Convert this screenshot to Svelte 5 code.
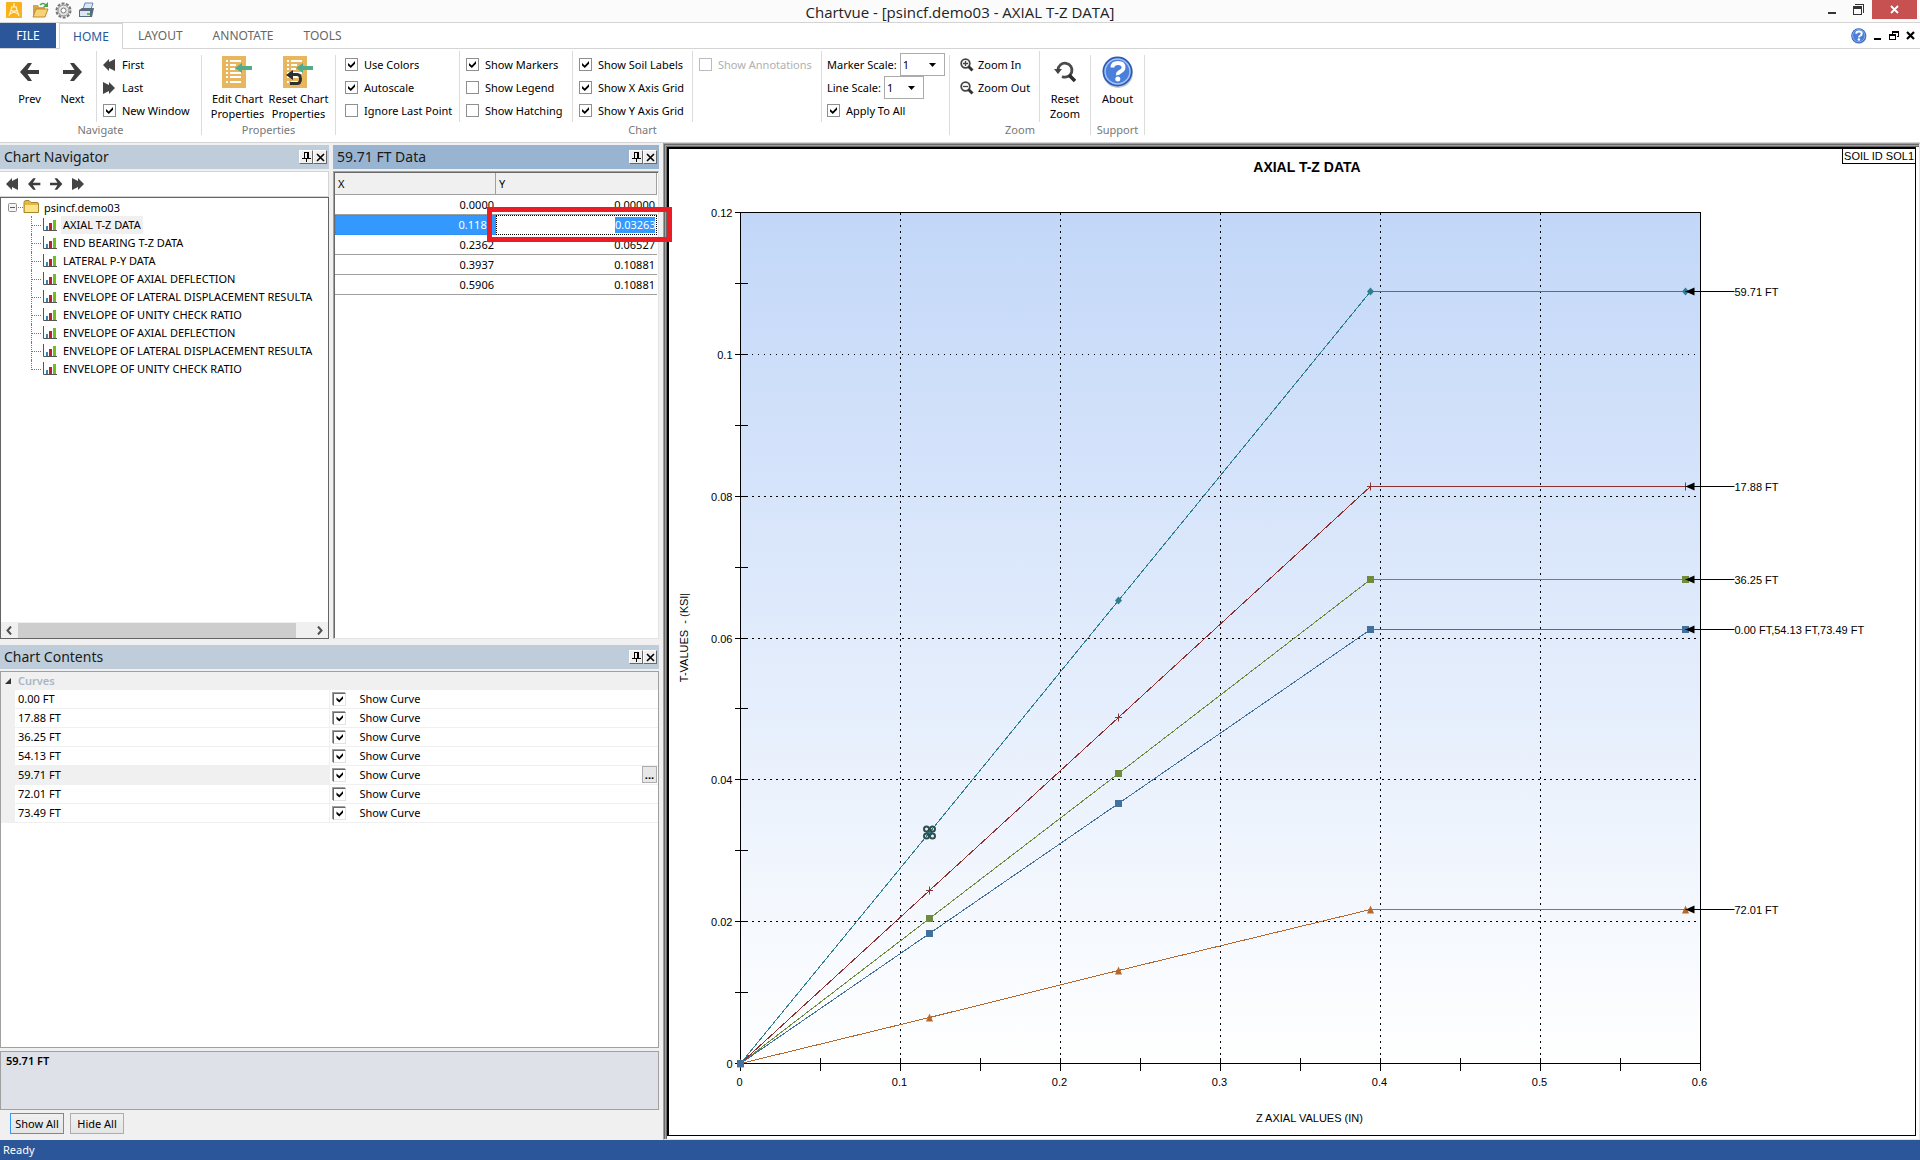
<script lang="ts">
	type Check = { label: string; on: boolean; disabled?: boolean };

	const tabs = ['LAYOUT', 'ANNOTATE', 'TOOLS'];

	const chartChecks: { cls: string; items: Check[] }[] = [
		{
			cls: 'colors',
			items: [
				{ label: 'Use Colors', on: true },
				{ label: 'Autoscale', on: true },
				{ label: 'Ignore Last Point', on: false }
			]
		},
		{
			cls: 'markers',
			items: [
				{ label: 'Show Markers', on: true },
				{ label: 'Show Legend', on: false },
				{ label: 'Show Hatching', on: false }
			]
		},
		{
			cls: 'grids',
			items: [
				{ label: 'Show Soil Labels', on: true },
				{ label: 'Show X Axis Grid', on: true },
				{ label: 'Show Y Axis Grid', on: true }
			]
		},
		{
			cls: 'notes',
			items: [{ label: 'Show Annotations', on: false, disabled: true }]
		}
	];

	const plots = [
		'AXIAL T-Z DATA',
		'END BEARING T-Z DATA',
		'LATERAL P-Y DATA',
		'ENVELOPE OF AXIAL DEFLECTION',
		'ENVELOPE OF LATERAL DISPLACEMENT RESULTA',
		'ENVELOPE OF UNITY CHECK RATIO',
		'ENVELOPE OF AXIAL DEFLECTION',
		'ENVELOPE OF LATERAL DISPLACEMENT RESULTA',
		'ENVELOPE OF UNITY CHECK RATIO'
	];
	let selectedPlot = $state(0);

	const points = [
		['0.0000', '0.00000'],
		['0.1181', '0.03263'],
		['0.2362', '0.06527'],
		['0.3937', '0.10881'],
		['0.5906', '0.10881']
	];
	let selectedPoint = $state(1);

	let curves = $state(
		['0.00 FT', '17.88 FT', '36.25 FT', '54.13 FT', '59.71 FT', '72.01 FT', '73.49 FT'].map(
			(name) => ({ name, shown: true })
		)
	);
	let selectedCurve = $state(4);

	function setAll(shown: boolean) {
		for (const c of curves) c.shown = shown;
	}

	// chart
	const xs = [0, 0.1181, 0.2362, 0.3937, 0.5906];
	const series = [
		{ label: '72.01 FT', color: '#b8672b', marker: 'triangle', ys: [0, 0.00655, 0.0131, 0.02178, 0.02178] },
		{ label: '36.25 FT', color: '#6f8c3c', marker: 'square', ys: [0, 0.02045, 0.0409, 0.06825, 0.06825] },
		{ label: '17.88 FT', color: '#8c3030', marker: 'cross', ys: [0, 0.0244, 0.0488, 0.0813, 0.0813] },
		{ label: '59.71 FT', color: '#2f7f93', marker: 'diamond', ys: [0, 0.03263, 0.06527, 0.10881, 0.10881] },
		{ label: '0.00 FT,54.13 FT,73.49 FT', color: '#41719c', marker: 'square', ys: [0, 0.01838, 0.0367, 0.0612, 0.0612] }
	];
	const maxX = 0.6;
	const maxY = 0.12;

	let width = $state(0);
	let height = $state(0);
	let left = 71;
	let top = 63;
	let right = $derived(width - 215);
	let bottom = $derived(height - 72);

	const px = (v: number) => Math.round(left + (v / maxX) * (right - left)) + 0.5;
	const py = (v: number) => Math.round(bottom - (v / maxY) * (bottom - top)) + 0.5;

	const xTicks = Array.from({ length: 13 }, (_, i) => i * 0.05);
	const yTicks = Array.from({ length: 13 }, (_, i) => i * 0.01);
	const tickLabel = (v: number) => String(Number(v.toFixed(2)));
</script>

{#snippet back()}
	<svg width="20" height="18" viewBox="0 0 20 18"><path d="M0 9 8 0h4L7.500 7H19v4H7.500l4.500 7H8z" fill="#3d3d3d" /></svg>
{/snippet}

{#snippet forward()}
	<svg width="20" height="18" viewBox="0 0 20 18"><path d="M19 9 11 0H7l4.500 7H0v4h11.500L7 18h4z" fill="#3d3d3d" /></svg>
{/snippet}

{#snippet rewind()}
	<svg width="13" height="12" viewBox="0 0 13 12"><path d="M0 6 6 0v3l6-3v12L6 9v3z" fill="#444" /></svg>
{/snippet}

{#snippet fastForward()}
	<svg width="13" height="12" viewBox="0 0 13 12"><path d="M12 6 6 0v3L0 0v12l6-3v3z" fill="#444" /></svg>
{/snippet}

{#snippet sheet(undo: boolean)}
	<svg width="32" height="32" viewBox="0 0 32 32">
		<path d="M0 0h24v32H0z" fill="#e9b660" />
		<path d="M4 5h2m2 0h11M4 9h2m2 0h6M4 13h2m2 0h5M4 17h2m2 0h11M4 21h2m2 0h11M4 26h2m2 0h11" stroke="#fff" stroke-width="2" />
		<path d="M13 12 20 7v3h10v4H20v3z" fill="#52ab8a" />
		{#if undo}
			<path d="M3 19l7-5v3h4q5 0 5 6t-5 6H7v-3h7q2 0 2-3t-2-3h-4v4z" fill="#2f2f2f" />
		{/if}
	</svg>
{/snippet}

{#snippet lens(plus: boolean)}
	<svg width="14" height="14" viewBox="0 0 14 14">
		<circle cx="5.500" cy="5.500" r="4.300" fill="none" stroke="#444" stroke-width="1.800" />
		<path d="M8.500 8.500 12.500 12.500" stroke="#333" stroke-width="3" />
		<path d={plus ? 'M3 5.500h5M5.500 3v5' : 'M3 5.500h5'} stroke="#444" stroke-width="1.300" />
	</svg>
{/snippet}

{#snippet help(size: number)}
	<svg width={size} height={size} viewBox="0 0 32 32">
		<circle cx="16" cy="17" r="15" fill="#c4c8d0" />
		<circle cx="15.500" cy="15.500" r="15" fill="#2c5ab8" />
		<circle cx="15.500" cy="15.500" r="12.500" fill="#4a80dc" stroke="#a9c4f0" stroke-width="1.500" />
		<path d="M10.500 11.500q0-4.500 5.500-4.500t5.500 4.500q0 2.500-3 4t-2.500 3.500" fill="none" stroke="#fff" stroke-width="3.800" />
		<circle cx="15.800" cy="23" r="2.500" fill="#fff" />
	</svg>
{/snippet}

{#snippet paneTitle(text: string)}
	<span>{text}</span>
	<button class="pane-btn" aria-label="Auto hide">
		<svg width="9" height="10" viewBox="0 0 9 10" shape-rendering="crispEdges"><path d="M2 0h5v6h2v1H5v3H4V7H0V6h2zM3 1v5h2V1z" fill-rule="evenodd" /></svg>
	</button>
	<button class="pane-btn" aria-label="Close pane">
		<svg width="9" height="9" viewBox="0 0 9 9"><path d="M1 1l7 7M8 1l-7 7" stroke="#000" stroke-width="1.600" /></svg>
	</button>
{/snippet}

{#snippet marker(kind: string, x: number, y: number, color: string)}
	{#if kind === 'square'}
		<rect x={x - 3.5} y={y - 3.5} width="7" height="7" fill={color} />
	{:else if kind === 'triangle'}
		<path d="M{x} {y - 4}l3.500 8h-7z" fill={color} />
	{:else if kind === 'diamond'}
		<path d="M{x} {y - 4}l3.500 4-3.500 4-3.500-4z" fill={color} />
	{:else}
		<path d="M{x - 3.5} {y}h7M{x} {y - 4}v8" stroke={color} />
	{/if}
{/snippet}

<div class="window">
	<header class="titlebar">
		<div class="quick">
			<svg width="16" height="16" viewBox="0 0 16 16">
				<rect width="16" height="16" rx="1" fill="#fbb21a" />
				<path d="M8 1v3M5 5h6M6 5l-3 9M10 5l3 9M5 9h6M4 12l7-4M12 12 5 8M7 4h2" fill="none" stroke="#fff0c0" stroke-width="1.200" />
			</svg>
			<svg width="17" height="16" viewBox="0 0 17 16">
				<path d="M1 3h5l1 2h6v9H1z" fill="#d9a441" />
				<path d="M4 7h12l-3 8H1z" fill="#f7d377" stroke="#c08a2a" />
				<path d="M8 3q3-3 6 0" fill="none" stroke="#46a546" stroke-width="1.500" />
				<path d="M16 0v5h-5z" fill="#46a546" />
			</svg>
			<svg width="17" height="17" viewBox="0 0 17 17">
				<circle cx="8.500" cy="8.500" r="7" fill="none" stroke="#777" stroke-width="2" stroke-dasharray="3 1.400" />
				<circle cx="8.500" cy="8.500" r="5.500" fill="#e4e4e4" stroke="#888" />
				<circle cx="8.500" cy="8.500" r="2.500" fill="#fff" stroke="#777" />
			</svg>
			<svg width="17" height="16" viewBox="0 0 17 16">
				<path d="M5 7l2-6h8l-2 6z" fill="#dce8f8" stroke="#6d87b0" />
				<path d="M1 8l3-2h12l-2 9H1z" fill="#5a6a80" />
				<path d="M2 9h10v5H2z" fill="#dfe5ee" />
				<path d="M9 11h3v2H9z" fill="#3fd03f" />
			</svg>
		</div>
		<h1>Chartvue - [psincf.demo03 - AXIAL T-Z DATA]</h1>
		<div class="controls">
			<button class="control" aria-label="Minimize">
				<svg width="10" height="11" viewBox="0 0 10 11"><path d="M1 8h8v2H1z" fill="#333" /></svg>
			</button>
			<button class="control" aria-label="Restore">
				<svg width="11" height="11" viewBox="0 0 11 11" shape-rendering="crispEdges"><path d="M2 0h9v9h-1V1H2zM0 2h9v9H0zM1 5v5h7V5z" fill-rule="evenodd" fill="#333" /></svg>
			</button>
			<button class="control close" aria-label="Close">
				<svg width="9" height="9" viewBox="0 0 9 9"><path d="M1 1l7 7M8 1l-7 7" stroke="#fff" stroke-width="1.800" /></svg>
			</button>
		</div>
	</header>

	<nav class="tabs">
		<button class="file">FILE</button>
		<button class="tab active">HOME</button>
		{#each tabs as tab}
			<button class="tab">{tab}</button>
		{/each}
		<div class="child-controls">
			<button aria-label="Help">{@render help(16)}</button>
			<button aria-label="Minimize chart"><svg width="8" height="10" viewBox="0 0 8 10"><path d="M0 7h7v2H0z" /></svg></button>
			<button aria-label="Restore chart"><svg width="10" height="10" viewBox="0 0 10 10" shape-rendering="crispEdges"><path d="M3 0h7v6H8V5h1V2H4v1H3zM0 3h7v6H0zM1 5v3h5V5z" fill-rule="evenodd" /></svg></button>
			<button aria-label="Close chart"><svg width="9" height="9" viewBox="0 0 9 9"><path d="M1 1l7 7M8 1l-7 7" stroke="#000" stroke-width="2.200" /></svg></button>
		</div>
	</nav>

	<div class="ribbon">
		<section class="group">
			<div class="tools">
				<div class="bigs navigate">
					<button class="big"><span class="icon">{@render back()}</span><span>Prev</span></button>
					<button class="big"><span class="icon">{@render forward()}</span><span>Next</span></button>
				</div>
				<span class="rule"></span>
				<div class="stack jump">
					<button class="small">{@render rewind()}First</button>
					<button class="small">{@render fastForward()}Last</button>
					<label class="small"><input type="checkbox" checked />New Window</label>
				</div>
			</div>
			<h2>Navigate</h2>
		</section>
		<span class="rule long"></span>

		<section class="group">
			<div class="tools">
				<div class="bigs properties">
					<button class="big"><span class="icon">{@render sheet(false)}</span><span>Edit Chart<br />Properties</span></button>
					<button class="big"><span class="icon">{@render sheet(true)}</span><span>Reset Chart<br />Properties</span></button>
				</div>
			</div>
			<h2>Properties</h2>
		</section>
		<span class="rule long"></span>

		<section class="group">
			<div class="tools">
				{#each chartChecks as col}
					<div class="stack {col.cls}">
						{#each col.items as item}
							<label class="small" class:disabled={item.disabled}>
								<input type="checkbox" checked={item.on} disabled={item.disabled} />{item.label}
							</label>
						{/each}
					</div>
					<span class="rule"></span>
				{/each}
				<div class="stack scales">
					<label class="small scale">
						Marker Scale:
						<span class="combo wide">
							<select><option>1</option><option>2</option></select>
							<svg width="7" height="4" viewBox="0 0 7 4"><path d="M0 0h7L3.500 4z" /></svg>
						</span>
					</label>
					<label class="small scale">
						Line Scale:
						<span class="combo">
							<select><option>1</option><option>2</option></select>
							<svg width="7" height="4" viewBox="0 0 7 4"><path d="M0 0h7L3.500 4z" /></svg>
						</span>
					</label>
					<label class="small"><input type="checkbox" checked />Apply To All</label>
				</div>
			</div>
			<h2>Chart</h2>
		</section>
		<span class="rule long"></span>

		<section class="group">
			<div class="tools">
				<div class="stack zooms">
					<button class="small">{@render lens(true)}Zoom In</button>
					<button class="small">{@render lens(false)}Zoom Out</button>
				</div>
				<span class="rule"></span>
				<div class="bigs reset">
					<button class="big">
						<span class="icon">
							<svg width="22" height="22" viewBox="0 0 22 22">
								<path d="M4 9a7 7 0 1 1 4 6.500" fill="none" stroke="#4a4a4a" stroke-width="2.800" />
								<path d="M0 8h8l-4 5z" fill="#444" />
								<path d="M15 14l6 6" stroke="#2d2d2d" stroke-width="3.500" />
							</svg>
						</span>
						<span>Reset<br />Zoom</span>
					</button>
				</div>
			</div>
			<h2>Zoom</h2>
		</section>
		<span class="rule long"></span>

		<section class="group">
			<div class="tools">
				<div class="bigs support">
					<button class="big"><span class="icon">{@render help(32)}</span><span>About</span></button>
				</div>
			</div>
			<h2>Support</h2>
		</section>
		<span class="rule long"></span>
	</div>

	<main class="workspace">
		<div class="dock">
			<div class="upper">
				<section class="pane">
					<h3 class="pane-title">{@render paneTitle('Chart Navigator')}</h3>
					<div class="nav-tools">
						<button aria-label="First plot">{@render rewind()}</button>
						<button class="arrow" aria-label="Previous plot">{@render back()}</button>
						<button class="arrow" aria-label="Next plot">{@render forward()}</button>
						<button aria-label="Last plot">{@render fastForward()}</button>
					</div>
					<div class="tree">
						<div class="root">
							<svg width="31" height="18" viewBox="0 0 31 18">
								<rect x="0.500" y="5.500" width="8" height="8" rx="1" fill="#f4f4f4" stroke="#919191" />
								<path d="M2 9.500h5" stroke="#3a5fb0" />
								<path d="M10 9.500h5" stroke="#777" stroke-dasharray="1 1" />
								<path d="M16 4.500q0-2 2-2h3l2 2h6q1.500 0 1.500 1.500v8.500H16z" fill="#e3b842" stroke="#a8862c" />
								<path d="M17 7h13v7H17z" fill="#fbe487" />
							</svg>
							psincf.demo03
						</div>
						<ul>
							{#each plots as plot, i}
								<li>
									<span class="branch"></span>
									<svg width="14" height="14" viewBox="0 0 14 14">
										<path d="M0.500 0v12.500H14" fill="none" stroke="#555" />
										<rect x="3" y="8" width="2" height="4" fill="#2f86b8" />
										<rect x="6" y="5" width="3" height="7" fill="#c0202c" />
										<rect x="10" y="2" width="3" height="10" fill="#6cc024" />
									</svg>
									<button class="plot" class:selected={i === selectedPlot} onclick={() => (selectedPlot = i)}>{plot}</button>
								</li>
							{/each}
						</ul>
						<div class="scrollbar">
							<svg width="6" height="9" viewBox="0 0 6 9"><path d="M5 0.500 1.500 4.500 5 8.500" fill="none" stroke="#505050" stroke-width="2" /></svg>
							<span class="track"><span class="thumb"></span></span>
							<svg width="6" height="9" viewBox="0 0 6 9"><path d="M1 0.500 4.500 4.500 1 8.500" fill="none" stroke="#505050" stroke-width="2" /></svg>
						</div>
					</div>
				</section>

				<section class="pane">
					<h3 class="pane-title current">{@render paneTitle('59.71 FT Data')}</h3>
					<div class="data">
						<table>
							<thead>
								<tr><th>X</th><th>Y</th></tr>
							</thead>
							<tbody>
								{#each points as [x, y], i}
									<tr class:selected={i === selectedPoint} onclick={() => (selectedPoint = i)}>
										<td>{x}</td>
										<td>
											{#if i === selectedPoint}
												<input type="text" value={y} aria-label="Y value" />
											{:else}
												{y}
											{/if}
										</td>
									</tr>
								{/each}
							</tbody>
						</table>
						<div class="highlight"></div>
					</div>
				</section>
			</div>

			<section class="pane">
				<h3 class="pane-title">{@render paneTitle('Chart Contents')}</h3>
				<div class="contents">
					<div class="category">
						<svg width="6" height="6" viewBox="0 0 6 6"><path d="M6 0v6H0z" fill="#333" /></svg>
						Curves
					</div>
					{#each curves as curve, i}
						<div class="curve" class:selected={i === selectedCurve}>
							<span class="name">{curve.name}</span>
							<label><input class="sunken" type="checkbox" bind:checked={curve.shown} />Show Curve</label>
							{#if i === selectedCurve}
								<button class="more">...</button>
							{/if}
						</div>
					{/each}
				</div>
				<div class="description">{curves[selectedCurve].name}</div>
				<div class="actions">
					<button class="default" onclick={() => setAll(true)}>Show All</button>
					<button onclick={() => setAll(false)}>Hide All</button>
				</div>
			</section>
		</div>

		<div class="frame">
			<div class="paper" bind:clientWidth={width} bind:clientHeight={height}>
				{#if width}
					<svg class="chart" {width} {height}>
						<defs>
							<linearGradient id="sky" x1="0" y1="0" x2="0" y2="1">
								<stop offset="0" stop-color="#c2d7f8" />
								<stop offset="1" stop-color="#ffffff" />
							</linearGradient>
						</defs>
						<g shape-rendering="crispEdges">
							<rect x={px(0)} y={py(maxY)} width={right - left} height={bottom - top} fill="url(#sky)" stroke="#000" />
							{#each xTicks as t, i}
								{#if i % 2 === 0 && i > 0 && i < 12}
									<line class="grid" x1={px(t)} x2={px(t)} y1={py(maxY)} y2={py(0)} />
								{/if}
								<line class="axis" x1={px(t)} x2={px(t)} y1={py(0) - 6} y2={py(0) + 7} />
							{/each}
							{#each yTicks as t, i}
								{#if i % 2 === 0 && i > 0 && i < 12}
									<line class="grid" class:fine={i === 10} x1={px(0) + 11} x2={px(maxX)} y1={py(t)} y2={py(t)} />
								{/if}
								<line class="axis" x1={px(0) - 6} x2={px(0) + 7} y1={py(t)} y2={py(t)} />
							{/each}
							{#each series as s}
								<polyline points={s.ys.map((y, i) => `${px(xs[i])},${py(y)}`).join(' ')} fill="none" stroke={s.color} />
							{/each}
						</g>
						{#each series as s}
							{#each s.ys as y, i}
								{@render marker(s.marker, px(xs[i]), py(y), s.color)}
							{/each}
							<path d="M{px(0.5906)} {py(s.ys[4])}l9-4v8z" />
							<line class="axis" x1={px(0.5906)} x2={px(0.5906) + 49} y1={py(s.ys[4])} y2={py(s.ys[4])} />
							<text x={px(0.5906) + 49} y={py(s.ys[4]) + 4}>{s.label}</text>
						{/each}
						<!-- picked point -->
						{#each [-3, 3] as dx}
							{#each [-3.5, 3.5] as dy}
								<circle cx={px(0.1181) + dx} cy={py(0.03263) + dy} r="2.500" fill="none" stroke="#2f4f4f" stroke-width="2" />
							{/each}
						{/each}
						{#each xTicks as t, i}
							{#if i % 2 === 0}
								<text x={px(t) - 1} y={py(0) + 22} text-anchor="middle">{tickLabel(t)}</text>
							{/if}
						{/each}
						{#each yTicks as t, i}
							{#if i % 2 === 0}
								<text x={px(0) - 8} y={py(t) + 4} text-anchor="end">{tickLabel(t)}</text>
							{/if}
						{/each}
						<text class="title" x={width * 0.512} y="23" text-anchor="middle">AXIAL T-Z DATA</text>
						<text x={width * 0.514} y={height - 13} text-anchor="middle">Z AXIAL VALUES (IN)</text>
						<text transform="translate(19 {(top + bottom) / 2}) rotate(-90)" text-anchor="middle" xml:space="preserve">T-VALUES  - (KSI|</text>
					</svg>
				{/if}
				<div class="soil">SOIL ID SOL1</div>
			</div>
		</div>
	</main>

	<footer>Ready</footer>
</div>

<style>
	:global(body) {
		margin: 0;
	}

	.window {
		display: flex;
		flex-direction: column;
		height: 100vh;
		overflow: hidden;
		background: #f0f0f0;
		color: #000;
		font-family: 'Noto Sans', 'Open Sans', sans-serif;
		font-size: 11px;
	}

	button,
	input,
	select {
		margin: 0;
		padding: 0;
		border: 0;
		background: none;
		color: inherit;
		font: inherit;
	}

	h1,
	h2,
	h3 {
		margin: 0;
		font-weight: normal;
	}

	svg {
		display: block;
		flex: none;
	}

	/* title bar */
	.titlebar {
		display: grid;
		grid-template-columns: 1fr auto 1fr;
		height: 22px;
		border-bottom: 1px solid #d4d4d4;
		background: #fbfbfb;
	}

	.quick {
		display: flex;
		align-items: center;
		gap: 6px;
		padding-left: 6px;
		height: 20px;
	}

	.quick svg:first-child {
		margin-right: 4px;
	}

	.titlebar h1 {
		font-family: 'Open Sans', sans-serif;
		font-size: 15px;
		line-height: 25px;
		height: 22px;
		color: #222;
	}

	.controls {
		display: flex;
		justify-content: flex-end;
		padding-right: 3px;
	}

	.control {
		display: flex;
		align-items: center;
		justify-content: center;
		width: 27px;
		height: 19px;
	}

	.close {
		width: 45px;
		background: #c75050;
	}

	/* tabs */
	.tabs {
		display: flex;
		height: 25px;
		border-bottom: 1px solid #d4d4d4;
		background: #fff;
		font-size: 12px;
		color: #666;
	}

	.file {
		width: 56px;
		margin-right: 3px;
		background: #2b579a;
		color: #fff;
	}

	.tab {
		padding: 0 15px;
	}

	.tab.active {
		width: 64px;
		height: 26px;
		padding: 0;
		border: 1px solid #d4d4d4;
		border-bottom: 0;
		background: #fff;
		color: #2b579a;
	}

	.child-controls {
		display: flex;
		align-items: center;
		gap: 7px;
		margin-left: auto;
		padding-right: 5px;
	}

	/* ribbon */
	.ribbon {
		display: flex;
		height: 93px;
		border-bottom: 1px solid #d4d4d4;
		background: #fff;
	}

	.group {
		display: flex;
		flex-direction: column;
	}

	.group h2 {
		font-size: 11px;
		line-height: 18px;
		text-align: center;
		color: #777;
	}

	.tools {
		display: flex;
		height: 72px;
	}

	.rule {
		width: 1px;
		height: 71px;
		margin-top: 2px;
		background: #dcdcdc;
	}

	.rule.long {
		height: 80px;
		margin-top: 6px;
	}

	.bigs {
		display: flex;
		box-sizing: border-box;
	}

	.big {
		display: flex;
		flex: 1;
		flex-direction: column;
		align-items: center;
		gap: 3px;
		padding-top: 7px;
		line-height: 15px;
		white-space: nowrap;
	}

	.icon {
		display: flex;
		align-items: center;
		justify-content: center;
		height: 32px;
	}

	.navigate {
		width: 96px;
		padding: 0 2px 0 8px;
	}

	.properties {
		width: 133px;
		padding: 0 6px 0 5px;
	}

	.reset {
		width: 50px;
	}

	.support {
		width: 53px;
	}

	.stack {
		box-sizing: border-box;
		padding: 4px 0 0 6px;
	}

	.jump {
		width: 104px;
	}

	.colors {
		width: 123px;
		padding-left: 9px;
	}

	.markers {
		width: 112px;
	}

	.grids {
		width: 119px;
	}

	.notes {
		width: 128px;
	}

	.scales {
		width: 127px;
		padding-left: 5px;
	}

	.zooms {
		width: 89px;
		padding-left: 10px;
	}

	.small {
		display: flex;
		align-items: center;
		gap: 6px;
		height: 23px;
		white-space: nowrap;
	}

	.zooms .small {
		gap: 4px;
	}

	.small.scale {
		gap: 3px;
	}

	.disabled {
		color: #b0b0b0;
	}

	input[type='checkbox'] {
		appearance: none;
		box-sizing: border-box;
		flex: none;
		width: 13px;
		height: 13px;
		border: 1px solid #8e8f8f;
		background: #fff;
	}

	input[type='checkbox']:disabled {
		border-color: #bcbcbc;
	}

	input[type='checkbox']:checked::before {
		content: '';
		display: block;
		width: 7px;
		height: 7px;
		margin: 2px;
		background: #000;
		clip-path: polygon(0 30%, 40% 65%, 100% 0, 100% 40%, 40% 100%, 0 65%);
	}

	input.sunken {
		border-color: #696969 #e3e3e3 #e3e3e3 #696969;
		box-shadow: -1px -1px 0 #a0a0a0;
	}

	.combo {
		display: grid;
		grid-template-columns: 1fr 15px;
		align-items: center;
		box-sizing: border-box;
		width: 40px;
		height: 23px;
		border: 1px solid #ababab;
		background: #fff;
	}

	.combo.wide {
		width: 45px;
	}

	.combo select {
		grid-area: 1 / 1 / 2 / 3;
		appearance: none;
		padding-left: 2px;
		height: 21px;
	}

	.combo svg {
		grid-area: 1 / 2;
		pointer-events: none;
	}

	/* docked panes */
	.workspace {
		display: flex;
		flex: 1;
		min-height: 0;
	}

	.dock {
		display: grid;
		grid-template-rows: 494fr 495fr;
		gap: 6px;
		flex: 0 0 659px;
		padding-top: 2px;
		min-height: 0;
	}

	.upper {
		display: grid;
		grid-template-columns: 329fr 326fr;
		gap: 4px;
		min-height: 0;
	}

	.pane {
		display: flex;
		flex-direction: column;
		min-width: 0;
		min-height: 0;
	}

	.pane-title {
		display: flex;
		align-items: center;
		height: 24px;
		margin-bottom: 2px;
		padding: 0 2px 0 4px;
		background: #bfcddb;
		font-size: 14px;
		line-height: 24px;
		color: #1a1a1a;
	}

	.pane-title.current {
		background: #99b4d1;
	}

	.pane-title span {
		flex: 1;
	}

	.pane-btn {
		display: flex;
		align-items: center;
		justify-content: center;
		box-sizing: border-box;
		width: 14px;
		height: 14px;
		border: 1px solid;
		border-color: #fff #696969 #696969 #fff;
		background: #f0f0f0;
	}

	.nav-tools {
		display: flex;
		align-items: center;
		gap: 9px;
		box-sizing: border-box;
		height: 26px;
		padding-left: 6px;
		border: 1px solid #d4d4d4;
		border-left: 0;
		background: #fff;
	}

	.nav-tools .arrow svg {
		width: 13px;
		height: 12px;
	}

	.tree {
		display: flex;
		flex: 1;
		flex-direction: column;
		min-height: 0;
		border: 1px solid #646464;
		background: #fff;
	}

	.root {
		display: flex;
		align-items: center;
		gap: 5px;
		height: 18px;
		padding-left: 7px;
	}

	.tree ul {
		flex: 1;
		margin: 0;
		padding: 0 0 0 30px;
		overflow: hidden;
		list-style: none;
	}

	.tree li {
		display: flex;
		align-items: center;
		height: 18px;
	}

	.branch {
		flex: none;
		align-self: stretch;
		width: 10px;
		margin-right: 1px;
		border-left: 1px dotted #777;
		background: repeating-linear-gradient(90deg, #777 0 1px, #fff 1px 2px) 0 9px / 10px 1px no-repeat;
	}

	.tree li:last-child .branch {
		align-self: flex-start;
		height: 10px;
	}

	.plot {
		flex: none;
		margin-left: 4px;
		padding: 0 2px;
		line-height: 18px;
		white-space: nowrap;
	}

	.plot.selected {
		background: #f0f0f0;
	}

	.scrollbar {
		display: flex;
		align-items: center;
		gap: 6px;
		height: 16px;
		padding: 0 5px;
		background: #f0f0f0;
	}

	.track {
		flex: 1;
	}

	.thumb {
		display: block;
		width: 95%;
		height: 15px;
		background: #cdcdcd;
	}

	/* point table */
	.data {
		position: relative;
		flex: 1;
		border: 1px solid;
		border-color: #a0a0a0 #e3e3e3 #e3e3e3 #a0a0a0;
		background: #fff;
		box-shadow: inset 1px 1px 0 #696969;
		padding: 1px;
	}

	table {
		width: 100%;
		border-collapse: separate;
		border-spacing: 0;
		table-layout: fixed;
	}

	th {
		box-sizing: border-box;
		height: 22px;
		padding: 0 3px;
		border-right: 1px solid #a0a0a0;
		border-bottom: 1px solid #a0a0a0;
		background: #f0f0f0;
		font-weight: normal;
		text-align: left;
	}

	td {
		box-sizing: border-box;
		height: 20px;
		padding: 0 2px;
		border-bottom: 1px solid #a0a0a0;
		line-height: 16px;
		text-align: right;
	}

	tr.selected td:first-child {
		border: 1px dotted #c06a10;
		background: #3399ff;
		color: #fff;
	}

	tr.selected td:last-child {
		padding: 0 1px;
		border: 1px dotted #000;
	}

	td input {
		display: block;
		width: 40px;
		height: 16px;
		margin-left: auto;
		background: #3399ff;
		color: #fff;
		text-align: right;
	}

	.highlight {
		position: absolute;
		top: 35px;
		right: -14px;
		box-sizing: border-box;
		width: 185px;
		height: 35px;
		border: 5px solid #ed1c24;
		z-index: 1;
		pointer-events: none;
	}

	/* curve list */
	.contents {
		flex: 1;
		border: 1px solid #a0a0a0;
		background: #fff;
	}

	.category {
		display: flex;
		align-items: center;
		gap: 7px;
		height: 18px;
		padding-left: 4px;
		background: #f0f0f0;
		font-weight: 600;
		line-height: 16px;
		color: #a9b6c6;
	}

	.curve {
		display: grid;
		grid-template-columns: 315fr 327fr;
		height: 19px;
		padding-left: 14px;
		background: #f0f0f0;
		line-height: 18px;
	}

	.curve > * {
		height: 18px;
		background: #fff;
	}

	.curve .name {
		padding-left: 3px;
		border-right: 1px solid #f0f0f0;
	}

	.curve.selected .name {
		background: #f0f0f0;
	}

	.curve label {
		display: flex;
		align-items: center;
		gap: 13px;
		grid-column: 2;
		grid-row: 1;
		padding-left: 3px;
	}

	.curve .more {
		grid-column: 2;
		grid-row: 1;
		justify-self: end;
		box-sizing: border-box;
		width: 15px;
		height: 17px;
		margin-right: 1px;
		border: 1px solid #adadad;
		background: #e8e8e8;
		font-weight: bold;
		line-height: 14px;
	}

	.description {
		box-sizing: border-box;
		height: 59px;
		margin-top: 3px;
		padding: 1px 5px;
		border: 1px solid #a0a0a0;
		background: #dfe1e9;
		font-weight: 600;
	}

	.actions {
		display: flex;
		gap: 6px;
		padding: 3px 10px 6px;
	}

	.actions button {
		box-sizing: border-box;
		width: 54px;
		height: 21px;
		border: 1px solid #adadad;
		background: linear-gradient(#f0f0f0, #e5e5e5);
		white-space: nowrap;
	}

	.actions .default {
		border-color: #3399ff;
	}

	/* chart window */
	.frame {
		flex: 1;
		min-width: 0;
		margin-left: 4px;
		padding: 3px;
		border: 1px solid;
		border-color: #a0a0a0 #e3e3e3 #e3e3e3 #a0a0a0;
		background: #fff;
		box-shadow: inset 1px 1px 0 #696969, inset 2px 2px 0 #a0a0a0, inset 3px 3px 0 #696969;
	}

	.paper {
		position: relative;
		box-sizing: border-box;
		height: 100%;
		border: solid #000;
		border-width: 2px 1px 1px 2px;
		background: #fff;
		overflow: hidden;
	}

	.chart {
		position: absolute;
		inset: 0;
		font-family: 'Liberation Sans', Arial, sans-serif;
		font-size: 11px;
	}

	.chart .title {
		font-size: 14px;
		font-weight: bold;
	}

	.axis {
		stroke: #000;
	}

	.grid {
		stroke: #000;
		stroke-dasharray: 2 4;
	}

	.grid.fine {
		stroke-dasharray: 1 5;
	}

	.soil {
		position: absolute;
		top: -1px;
		right: 0;
		padding: 0 1px;
		border: 1px solid #000;
		border-right: 0;
		background: #fff;
		font-family: 'Liberation Sans', Arial, sans-serif;
		line-height: 14px;
	}

	footer {
		height: 20px;
		padding-left: 3px;
		background: #2b579a;
		color: #fff;
		line-height: 20px;
	}
</style>
